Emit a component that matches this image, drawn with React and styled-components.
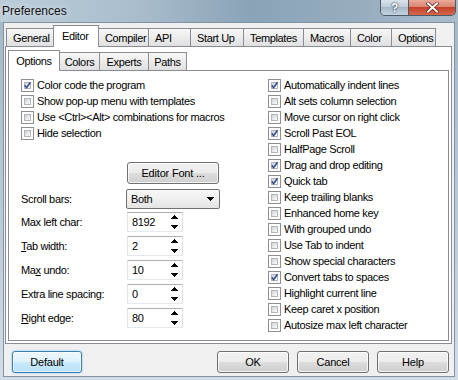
import React from "react";
import styled, { createGlobalStyle, css } from "styled-components";

const GlobalStyle = createGlobalStyle`
  html, body {
    margin: 0;
    padding: 0;
  }
  body {
    font-family: "Liberation Sans", Arial, sans-serif;
    font-size: 11px;
    letter-spacing: -0.35px;
    color: #000;
    background: #fff;
  }
`;

const mainTabs = [
  ["General", 48],
  ["Editor", 46, true],
  ["Compiler", 51],
  ["API", 43],
  ["Start Up", 54],
  ["Templates", 61],
  ["Macros", 48],
  ["Color", 42],
  ["Options", 45],
];

const subTabs = [
  ["Options", 52, true],
  ["Colors", 41],
  ["Experts", 50],
  ["Paths", 39],
];

const leftChecks = [
  ["Color code the program", true],
  ["Show pop-up menu with templates", false],
  ["Use <Ctrl><Alt> combinations for macros", false],
  ["Hide selection", false],
];

const rightChecks = [
  ["Automatically indent lines", true],
  ["Alt sets column selection", false],
  ["Move cursor on right click", false],
  ["Scroll Past EOL", true],
  ["HalfPage Scroll", false],
  ["Drag and drop editing", true],
  ["Quick tab", true],
  ["Keep trailing blanks", false],
  ["Enhanced home key", false],
  ["With grouped undo", false],
  ["Use Tab to indent", false],
  ["Show special characters", false],
  ["Convert tabs to spaces", true],
  ["Highlight current line", false],
  ["Keep caret x position", false],
  ["Autosize max left character", false],
];

const spins = [
  [<>Max left char:</>, "8192", 3],
  [<><u>T</u>ab width:</>, "2", 4],
  [<>Ma<u>x</u> undo:</>, "10", 4],
  [<>Extra line spacing:</>, "0", 4],
  [<><u>R</u>ight edge:</>, "80", 4],
];

function App() {
  return (
    <>
      <GlobalStyle />
      <Window>
        <TitleBar>
          <Title>Preferences</Title>
          <CaptionButtons>
            <HelpButton>?</HelpButton>
            <CloseButton>
              <svg width="13" height="11" viewBox="0 0 13 11">
                <path d="M2 1.5 L11 9.5 M11 1.5 L2 9.5" stroke="#5b1d12" strokeWidth="3.4" strokeLinecap="square" />
                <path d="M2 1.5 L11 9.5 M11 1.5 L2 9.5" stroke="#fff" strokeWidth="2" strokeLinecap="square" />
              </svg>
            </CloseButton>
          </CaptionButtons>
        </TitleBar>
        <Client>
          <TabStrip>
            {mainTabs.map(([label, w, active]) => (
              <Tab key={label} $w={w} $active={active}>
                {label}
              </Tab>
            ))}
          </TabStrip>
          <Page>
            <SubStrip>
              {subTabs.map(([label, w, active]) => (
                <SubTab key={label} $w={w} $active={active}>
                  {label}
                </SubTab>
              ))}
            </SubStrip>
            <Sheet>
              <Column>
                {leftChecks.map(([label, on]) => (
                  <Check key={label} label={label} on={on} />
                ))}
                <FontButton>Editor Font ...</FontButton>
                <FieldRow $top={5}>
                  <span>Scroll bars:</span>
                  <Select>
                    Both
                    <svg width="7" height="4" viewBox="0 0 7 4" shapeRendering="crispEdges">
                      <path d="M0 0 H7 V1 H6 V2 H5 V3 H4 V4 H3 V3 H2 V2 H1 V1 H0 Z" fill="#000" />
                    </svg>
                  </Select>
                </FieldRow>
                {spins.map(([label, value, top], i) => (
                  <FieldRow key={i} $top={top}>
                    <span>{label}</span>
                    <Spin>
                      {value}
                      <Arrows>
                        <svg width="7" height="4" viewBox="0 0 7 4" shapeRendering="crispEdges">
                          <path d="M3 0 H4 V1 H5 V2 H6 V3 H7 V4 H0 V3 H1 V2 H2 V1 H3 Z" fill="#000" />
                        </svg>
                        <svg width="7" height="4" viewBox="0 0 7 4" shapeRendering="crispEdges">
                          <path d="M0 0 H7 V1 H6 V2 H5 V3 H4 V4 H3 V3 H2 V2 H1 V1 H0 Z" fill="#000" />
                        </svg>
                      </Arrows>
                    </Spin>
                  </FieldRow>
                ))}
              </Column>
              <Column>
                {rightChecks.map(([label, on]) => (
                  <Check key={label} label={label} on={on} />
                ))}
              </Column>
            </Sheet>
          </Page>
          <ButtonBar>
            <Button $w={70} $focused>Default</Button>
            <Button $w={72} $push>OK</Button>
            <Button $w={72}>Cancel</Button>
            <Button $w={72}>Help</Button>
          </ButtonBar>
        </Client>
      </Window>
    </>
  );
}

function Check({ label, on }) {
  return (
    <CheckRow>
      <Box>
        {on && (
          <svg width="11" height="11" viewBox="0 0 11 11">
            <path d="M2.7 5.3 L4.6 7.7 L8.5 2.3" fill="none" stroke="#3a5390" strokeWidth="1.7" />
          </svg>
        )}
      </Box>
      <span>{label}</span>
    </CheckRow>
  );
}

const Window = styled.div`
  width: 458px;
  height: 380px;
  box-sizing: border-box;
  display: flex;
  flex-direction: column;
  overflow: hidden;
  background: linear-gradient(180deg, #b3c5d4 0px, #a5b9c9 22px, #bccbd8 60%, #d2dde6 100%);
`;

const TitleBar = styled.div`
  height: 22px;
  flex: none;
  display: flex;
  align-items: flex-start;
  background: linear-gradient(90deg, #bccdda 0%, #a9bdcc 30%, #8aa3b7 55%, #98aec0 80%, #a8bccb 100%);
`;

const Title = styled.div`
  padding: 4px 0 0 2px;
  font-size: 12px;
  line-height: 14px;
  letter-spacing: 0;
  color: #111;
  text-shadow: 0 0 6px rgba(255, 255, 255, 0.8);
`;

const CaptionButtons = styled.div`
  margin-left: auto;
  margin-right: 2px;
  display: flex;
  height: 15px;
  border: 1px solid #4b5a68;
  border-top: 0;
  border-radius: 0 0 5px 5px;
  overflow: hidden;
`;

const HelpButton = styled.div`
  width: 27px;
  display: flex;
  align-items: center;
  justify-content: center;
  border-right: 1px solid #4b5a68;
  background: linear-gradient(180deg, #d9e3eb 0%, #bccbd7 50%, #a6b9c8 50%, #c4d3df 100%);
  color: #fff;
  font-weight: bold;
  font-size: 12px;
  text-shadow: 0 0 2px #27384a, 0 0 1px #27384a;
`;

const CloseButton = styled.div`
  width: 46px;
  display: flex;
  align-items: center;
  justify-content: center;
  background: linear-gradient(180deg, #e9a99a 0%, #d98672 45%, #c5432a 50%, #d3684a 100%);
`;

const Client = styled.div`
  flex: 1;
  margin: 0 3px 3px;
  border: 1px solid #8193a3;
  background: #f0f0f0;
  display: flex;
  flex-direction: column;
  padding: 1px 2px 0 1px;
`;

const tabBase = css`
  box-sizing: border-box;
  width: ${(p) => p.$w}px;
  border: 1px solid #898c95;
  border-bottom: 0;
  margin-right: -1px;
  display: flex;
  align-items: center;
  white-space: nowrap;
  overflow: hidden;
  background: linear-gradient(180deg, #f7f7f7 0%, #ececec 50%, #e0e0e0 100%);
  ${(p) =>
    p.$active &&
    css`
      position: relative;
      z-index: 2;
      background: #fff;
      margin-bottom: -1px;
    `}
`;

const TabStrip = styled.div`
  height: 22px;
  flex: none;
  display: flex;
  align-items: flex-end;
  padding-left: 1px;
`;

const Tab = styled.div`
  ${tabBase}
  height: ${(p) => (p.$active ? 22 : 18)}px;
  padding: ${(p) => (p.$active ? "0 0 1px 8px" : "0 0 0 6px")};
`;

const Page = styled.div`
  height: 298px;
  box-sizing: border-box;
  flex: none;
  border: 1px solid #898c95;
  background: #fff;
  padding: 2px;
  display: flex;
  flex-direction: column;
`;

const SubStrip = styled.div`
  height: 21px;
  flex: none;
  display: flex;
  align-items: flex-end;
`;

const SubTab = styled.div`
  ${tabBase}
  height: ${(p) => (p.$active ? 21 : 18)}px;
  justify-content: center;
  padding-bottom: ${(p) => (p.$active ? 1 : 0)}px;
`;

const Sheet = styled.div`
  flex: 1;
  border: 1px solid #898c95;
  background: #fff;
  padding: 6px 0 0 12px;
  display: grid;
  grid-template-columns: 247px 1fr;
  align-items: start;
`;

const Column = styled.div`
  display: flex;
  flex-direction: column;
  align-items: flex-start;
`;

const CheckRow = styled.div`
  height: 16px;
  display: flex;
  align-items: center;
  gap: 3px;
  white-space: nowrap;
`;

const Box = styled.span`
  position: relative;
  flex: none;
  width: 13px;
  height: 13px;
  box-sizing: border-box;
  border: 1px solid #8e8f8f;
  background: #fff;
  padding: 2px;
  &::before {
    content: "";
    display: block;
    width: 100%;
    height: 100%;
    box-sizing: border-box;
    border: 1px solid #b1b5ba;
    background: linear-gradient(135deg, #d0d3d8 0%, #e9eaec 55%, #fafafa 100%);
  }
  svg {
    position: absolute;
    left: 0;
    top: 0;
  }
`;

const Button = styled.button`
  box-sizing: border-box;
  width: ${(p) => p.$w}px;
  height: 22px;
  padding: 0;
  border: 1px solid #707070;
  border-radius: 3px;
  font-family: "Liberation Sans", Arial, sans-serif;
  font-size: 11px;
  letter-spacing: -0.2px;
  color: #000;
  background: linear-gradient(180deg, #f2f2f2 0%, #ebebeb 50%, #dddddd 50%, #cfcfcf 100%);
  box-shadow: inset 0 0 0 1px rgba(255, 255, 255, 0.75);
  margin-left: ${(p) => (p.$push ? "auto" : "8px")};
  ${(p) =>
    p.$focused &&
    css`
      margin-left: 0;
      border-color: #3c7fb1;
      background: linear-gradient(180deg, #eef8fd 0%, #e0f2fc 50%, #cbeafc 50%, #b9e1f7 100%);
      box-shadow: inset 0 0 0 1px rgba(255, 255, 255, 0.6), 0 0 2px #5cb6ee;
    `}
`;

const FontButton = styled(Button)`
  width: 92px;
  margin: 21px 0 0 106px;
`;

const FieldRow = styled.div`
  margin-top: ${(p) => p.$top}px;
  height: 20px;
  display: grid;
  grid-template-columns: 105px auto;
  align-items: center;
  white-space: nowrap;
`;

const Select = styled.div`
  box-sizing: border-box;
  width: 94px;
  height: 20px;
  border: 1px solid #707070;
  border-radius: 2px;
  background: linear-gradient(180deg, #f8f8f8 0%, #efefef 50%, #e4e4e4 100%);
  display: flex;
  align-items: center;
  justify-content: space-between;
  padding: 0 5px 0 4px;
`;

const Spin = styled.div`
  box-sizing: border-box;
  width: 56px;
  height: 20px;
  margin-left: 1px;
  border: 1px solid #abadb3;
  border-color: #abadb3 #dbdfe6 #e3e9ef #e2e3ea;
  background: #fff;
  display: flex;
  align-items: center;
  padding: 0 4px;
`;

const Arrows = styled.div`
  margin-left: auto;
  height: 14px;
  display: flex;
  flex-direction: column;
  justify-content: space-between;
`;

const ButtonBar = styled.div`
  flex: 1;
  display: flex;
  align-items: flex-start;
  padding: 7px 3px 0 7px;
`;

export default App;
